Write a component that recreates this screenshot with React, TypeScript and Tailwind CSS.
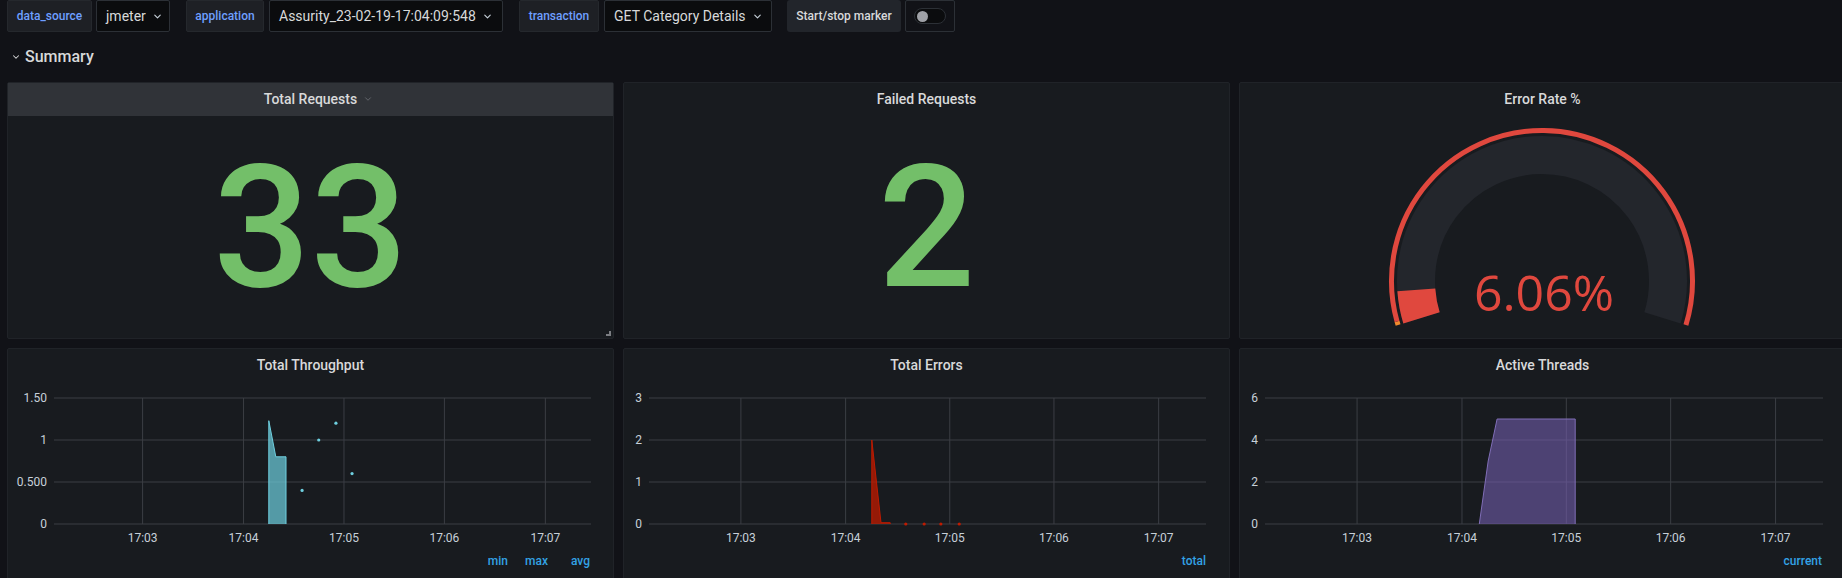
import { ChevronDown } from 'lucide-react'

const font = { fontFamily: 'Roboto, "Liberation Sans", sans-serif' }

// fractions of plot width where the minute gridlines fall (17:03 .. 17:07)
const minutes = [
  { f: 0.165, t: '17:03' },
  { f: 0.353, t: '17:04' },
  { f: 0.54, t: '17:05' },
  { f: 0.727, t: '17:06' },
  { f: 0.915, t: '17:07' }
]

type Series = { pts: [number, number][]; fill: string; opacity: number; line: string }

type ChartProps = {
  left: number
  right: number
  max: number
  ticks: { v: number; label: string }[]
  series: Series[]
  dots: [number, number][]
  dotColor: string
}

const TOP = 16
const BOTTOM = 142

function Chart({ left, right, max, ticks, series, dots, dotColor }: ChartProps) {
  let x = (f: number) => left + f * (right - left)
  let y = (v: number) => BOTTOM - (v / max) * (BOTTOM - TOP)
  return (
    <svg width={607} height={170} className="block">
      {ticks.map((t) => (
        <g key={t.label}>
          <line x1={left} x2={right} y1={y(t.v)} y2={y(t.v)} stroke="#3b3e44" strokeWidth={1} />
          <text
            x={left - 7}
            y={y(t.v) + 4}
            textAnchor="end"
            fontSize={12}
            fill="#c7d0d9"
            style={font}
          >
            {t.label}
          </text>
        </g>
      ))}
      {minutes.map((m) => (
        <g key={m.t}>
          <line x1={x(m.f)} x2={x(m.f)} y1={TOP} y2={BOTTOM} stroke="#3b3e44" strokeWidth={1} />
          <text x={x(m.f)} y={160} textAnchor="middle" fontSize={12} fill="#c7d0d9" style={font}>
            {m.t}
          </text>
        </g>
      ))}
      {series.map((s, i) => {
        let d = s.pts.map((p, j) => `${j ? 'L' : 'M'}${x(p[0]).toFixed(1)},${y(p[1]).toFixed(1)}`).join(' ')
        return (
          <g key={i}>
            <path d={d + ' Z'} fill={s.fill} fillOpacity={s.opacity} />
            <path d={d} fill="none" stroke={s.line} strokeWidth={1} />
          </g>
        )
      })}
      {dots.map((p, i) => (
        <circle key={i} cx={x(p[0])} cy={y(p[1])} r={1.6} fill={dotColor} />
      ))}
    </svg>
  )
}

function arcPath(cx: number, cy: number, r: number, a0: number, a1: number) {
  // angles in degrees, math convention; drawn clockwise on screen from a0 down to a1
  let rad = (a: number) => (a * Math.PI) / 180
  let sx = cx + r * Math.cos(rad(a0))
  let sy = cy - r * Math.sin(rad(a0))
  let ex = cx + r * Math.cos(rad(a1))
  let ey = cy - r * Math.sin(rad(a1))
  let large = a0 - a1 > 180 ? 1 : 0
  return `M${sx.toFixed(2)},${sy.toFixed(2)} A${r},${r} 0 ${large} 1 ${ex.toFixed(2)},${ey.toFixed(2)}`
}

function Gauge() {
  let cx = 302
  let cy = 165
  let start = 197
  let end = -17
  let value = start - 0.0606 * (start - end)
  return (
    <svg width={607} height={224} className="block">
      <path d={arcPath(cx, cy, 126, start, end)} stroke="#23262c" strokeWidth={38} fill="none" />
      <path d={arcPath(cx, cy, 126, start, value)} stroke="#e0483e" strokeWidth={38} fill="none" />
      <path d={arcPath(cx, cy, 150.5, start, 195.6)} stroke="#f08a2e" strokeWidth={5} fill="none" />
      <path d={arcPath(cx, cy, 150.5, 195.6, end)} stroke="#e0483e" strokeWidth={5} fill="none" />
      <text
        x={304}
        y={195}
        textAnchor="middle"
        fontSize={50}
        fill="#e0483e"
        style={{ fontFamily: '"Open Sans", "Noto Sans", sans-serif' }}
      >
        6.06%
      </text>
    </svg>
  )
}

function Label({ text, w }: { text: string; w: number }) {
  return (
    <div
      className="h-[32px] flex items-center justify-center rounded-[2px] border border-[#25282d] bg-[#1e2025] text-[12px] font-medium text-[#6e9fff]"
      style={{ width: w }}
    >
      {text}
    </div>
  )
}

function Select({ text, w }: { text: string; w: number }) {
  return (
    <div
      className="h-[32px] flex items-center pl-[9px] gap-[6px] rounded-[2px] border border-[#2c3036] bg-[#0b0c0e] text-[14px] text-[#d8d9da]"
      style={{ width: w }}
    >
      <span>{text}</span>
      <ChevronDown size={11} strokeWidth={2.5} className="text-[#c7d0d9]" />
    </div>
  )
}

function StatPanel({ title, value, hover }: { title: string; value: string; hover?: boolean }) {
  return (
    <div className="relative flex flex-col rounded-[2px] border border-[#202328] bg-[#181b1f]">
      <div
        className={
          hover
            ? 'h-[33px] flex items-center justify-center bg-[#303338] text-[14px] font-medium text-[#d8d9da]'
            : 'h-[33px] flex items-center justify-center text-[14px] font-medium text-[#d8d9da]'
        }
      >
        <span className="relative">
          {title}
          {hover && (
            <ChevronDown
              size={10}
              strokeWidth={2}
              className="absolute left-full top-[5px] ml-[6px] text-[#6c6f75]"
            />
          )}
        </span>
      </div>
      <div className="flex-1 flex items-center justify-center">
        <span className="text-[171px] font-medium leading-none text-[#73bf69]">{value}</span>
      </div>
      {hover && (
        <div className="absolute right-[2px] bottom-[2px] w-[5px] h-[5px] border-r-2 border-b-2 border-[#7b7d82]" />
      )}
    </div>
  )
}

function GraphPanel({
  title,
  legend,
  chart
}: {
  title: string
  legend: { text: string; ml: number }[]
  chart: ChartProps
}) {
  return (
    <div className="flex flex-col rounded-[2px] border border-[#202328] bg-[#181b1f]">
      <div className="h-[33px] flex items-center justify-center text-[14px] font-medium text-[#d8d9da]">
        {title}
      </div>
      <Chart {...chart} />
      <div className="h-[18px] flex items-center justify-end pr-[23px] text-[12px] font-medium text-[#33a2e5]">
        {legend.map((l) => (
          <span key={l.text} style={{ marginLeft: l.ml }}>
            {l.text}
          </span>
        ))}
      </div>
    </div>
  )
}

export default function App() {
  return (
    <div className="w-[1842px] h-[578px] overflow-hidden bg-[#111217] text-[#d8d9da]" style={font}>
      <div className="flex items-center pl-[7px] h-[32px]">
        <Label text="data_source" w={85} />
        <div className="ml-[4px]">
          <Select text="jmeter" w={74} />
        </div>
        <div className="ml-[16px]">
          <Label text="application" w={78} />
        </div>
        <div className="ml-[5px]">
          <Select text="Assurity_23-02-19-17:04:09:548" w={234} />
        </div>
        <div className="ml-[16px]">
          <Label text="transaction" w={80} />
        </div>
        <div className="ml-[5px]">
          <Select text="GET Category Details" w={168} />
        </div>
        <div className="ml-[15px] h-[32px] w-[114px] flex items-center justify-center rounded-[3px] bg-[#22252b] text-[12px] font-medium text-[#d8d9da]">
          Start/stop marker
        </div>
        <div className="ml-[4px] h-[32px] w-[50px] flex items-center pl-[8px] rounded-[2px] border border-[#2c3036]">
          <div className="w-[32px] h-[16px] rounded-full border border-[#2c3036] bg-[#0b0c0e] flex items-center pl-[2px]">
            <div className="w-[11px] h-[11px] rounded-full bg-[#9fa1a7]" />
          </div>
        </div>
      </div>

      <div className="h-[50px] flex items-center pl-[11px] gap-[4px]">
        <ChevronDown size={10} strokeWidth={2.5} className="text-[#d8d9da]" />
        <span className="text-[16px] font-medium text-[#d8d9da]">Summary</span>
      </div>

      <div className="grid grid-cols-[607px_607px_607px] grid-rows-[257px_257px] gap-[9px] pl-[7px]">
        <StatPanel title="Total Requests" value="33" hover />
        <StatPanel title="Failed Requests" value="2" />
        <div className="flex flex-col rounded-[2px] border border-[#202328] bg-[#181b1f]">
          <div className="h-[33px] flex items-center justify-center text-[14px] font-medium text-[#d8d9da]">
            Error Rate %
          </div>
          <Gauge />
        </div>

        <GraphPanel
          title="Total Throughput"
          legend={[
            { text: 'min', ml: 0 },
            { text: 'max', ml: 17 },
            { text: 'avg', ml: 23 }
          ]}
          chart={{
            left: 46,
            right: 583,
            max: 1.5,
            ticks: [
              { v: 0, label: '0' },
              { v: 0.5, label: '0.500' },
              { v: 1, label: '1' },
              { v: 1.5, label: '1.50' }
            ],
            series: [
              {
                pts: [
                  [0.4, 0],
                  [0.4, 1.23],
                  [0.413, 0.8],
                  [0.432, 0.8],
                  [0.432, 0]
                ],
                fill: '#6ed0e0',
                opacity: 0.7,
                line: '#6ed0e0'
              }
            ],
            dots: [
              [0.462, 0.4],
              [0.493, 1],
              [0.525, 1.2],
              [0.555, 0.6]
            ],
            dotColor: '#6ed0e0'
          }}
        />
        <GraphPanel
          title="Total Errors"
          legend={[{ text: 'total', ml: 0 }]}
          chart={{
            left: 25,
            right: 582,
            max: 3,
            ticks: [
              { v: 0, label: '0' },
              { v: 1, label: '1' },
              { v: 2, label: '2' },
              { v: 3, label: '3' }
            ],
            series: [
              {
                pts: [
                  [0.4, 0],
                  [0.4, 2],
                  [0.4165, 0.03],
                  [0.433, 0.03],
                  [0.433, 0]
                ],
                fill: '#bf1b00',
                opacity: 0.75,
                line: '#bf1b00'
              }
            ],
            dots: [
              [0.461, 0],
              [0.494, 0],
              [0.524, 0],
              [0.557, 0]
            ],
            dotColor: '#bf1b00'
          }}
        />
        <GraphPanel
          title="Active Threads"
          legend={[{ text: 'current', ml: 0 }]}
          chart={{
            left: 25,
            right: 583,
            max: 6,
            ticks: [
              { v: 0, label: '0' },
              { v: 2, label: '2' },
              { v: 4, label: '4' },
              { v: 6, label: '6' }
            ],
            series: [
              {
                pts: [
                  [0.384, 0],
                  [0.4, 3],
                  [0.416, 5],
                  [0.556, 5],
                  [0.556, 0]
                ],
                fill: '#7a62b8',
                opacity: 0.55,
                line: '#806eb7'
              }
            ],
            dots: [],
            dotColor: '#806eb7'
          }}
        />
      </div>
    </div>
  )
}
